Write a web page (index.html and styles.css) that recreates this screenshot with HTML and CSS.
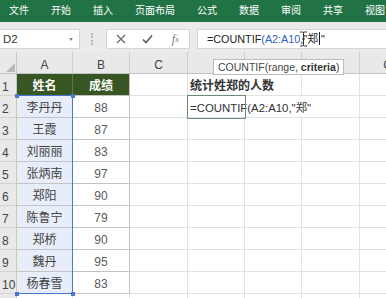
FILE: index.html
```html
<!DOCTYPE html>
<html lang="zh">
<head>
<meta charset="utf-8">
<link rel="stylesheet" href="styles.css">
</head>
<body>
<div class="app">
  <div class="tabs">
    <span class="tab first">文件</span>
    <span class="tab">开始</span>
    <span class="tab">插入</span>
    <span class="tab">页面布局</span>
    <span class="tab">公式</span>
    <span class="tab">数据</span>
    <span class="tab">审阅</span>
    <span class="tab">共享</span>
    <span class="tab">视图</span>
  </div>
  <div class="fbar">
    <div class="namebox"><span>D2</span><span class="dd"></span></div>
    <div class="sep"></div>
    <div class="btns">
      <span class="btn"><svg width="10" height="10" viewBox="0 0 10 10"><path d="M1 1 L9 9 M9 1 L1 9" stroke="#6a6a6a" stroke-width="1.3" fill="none"/></svg></span>
      <span class="btn"><svg width="11" height="10" viewBox="0 0 11 10"><path d="M1 5.5 L4 8.5 L10 1.5" stroke="#5a5a5a" stroke-width="1.6" fill="none"/></svg></span>
      <span class="btn fx">f<sub>x</sub></span>
    </div>
    <div class="formula">=COUNTIF<span class="ref">(A2:A10</span>,"郑<span class="caret"></span>"</div>
    <svg class="ibeam" width="9" height="16" viewBox="0 0 9 16"><path d="M1 1 H3.5 Q4.5 1 4.5 2 V14 Q4.5 15 3.5 15 H1 M8 1 H5.5 Q4.5 1 4.5 2 M4.5 14 Q4.5 15 5.5 15 H8 M3 8 H6" stroke="#333" stroke-width="1" fill="none"/></svg>
  </div>
  <div class="sheet">
    <div class="corner"><svg width="17" height="22" viewBox="0 0 17 22"><path d="M15 11 V20 H6 Z" fill="#b8b8b8"/></svg></div>
    <div class="ch">A</div><div class="ch">B</div><div class="ch">C</div><div class="ch"></div><div class="ch"></div><div class="ch"></div><div class="ch">G</div>

    <div class="rh">1</div><div class="c g">姓名</div><div class="c g gb">成绩</div><div class="c"></div><div class="c d1">统计姓郑的人数</div><div class="c"></div><div class="c"></div>

    <div class="rh">2</div><div class="c a">李丹丹</div><div class="c b">88</div><div class="c"></div><div class="c d2">=COUNTIF(A2:A10,"郑"</div><div class="c"></div>

    <div class="rh">3</div><div class="c a">王霞</div><div class="c b">87</div><div class="c"></div><div class="c"></div><div class="c"></div><div class="c"></div><div class="c"></div>
    <div class="rh">4</div><div class="c a">刘丽丽</div><div class="c b">83</div><div class="c"></div><div class="c"></div><div class="c"></div><div class="c"></div><div class="c"></div>
    <div class="rh">5</div><div class="c a">张炳南</div><div class="c b">97</div><div class="c"></div><div class="c"></div><div class="c"></div><div class="c"></div><div class="c"></div>
    <div class="rh">6</div><div class="c a">郑阳</div><div class="c b">90</div><div class="c"></div><div class="c"></div><div class="c"></div><div class="c"></div><div class="c"></div>
    <div class="rh">7</div><div class="c a">陈鲁宁</div><div class="c b">79</div><div class="c"></div><div class="c"></div><div class="c"></div><div class="c"></div><div class="c"></div>
    <div class="rh">8</div><div class="c a">郑桥</div><div class="c b">90</div><div class="c"></div><div class="c"></div><div class="c"></div><div class="c"></div><div class="c"></div>
    <div class="rh">9</div><div class="c a">魏丹</div><div class="c b">95</div><div class="c"></div><div class="c"></div><div class="c"></div><div class="c"></div><div class="c"></div>
    <div class="rh">10</div><div class="c a">杨春雪</div><div class="c b">83</div><div class="c"></div><div class="c"></div><div class="c"></div><div class="c"></div><div class="c"></div>
    <div class="rh"></div><div class="c"></div><div class="c"></div><div class="c"></div><div class="c"></div><div class="c"></div><div class="c"></div><div class="c"></div>

    <div class="range">
      <span class="hd tl"></span><span class="hd tr"></span><span class="hd bl"></span><span class="hd br"></span>
    </div>
    <div class="tip">COUNTIF(range, <b>criteria</b>)</div>
  </div>
</div>
</body>
</html>
```
FILE: styles.css
```css
html, body {
  margin: 0;
  padding: 0;
  background: #fff;
}
body {
  width: 386px;
  height: 298px;
  overflow: hidden;
  font-family: "Liberation Sans", "Noto Sans CJK SC", sans-serif;
}
.app {
  width: 386px;
  height: 298px;
  overflow: hidden;
}
.tabs {
  height: 22px;
  background: #217346;
  display: flex;
  align-items: center;
  padding-bottom: 2px;
  box-sizing: border-box;
  white-space: nowrap;
}
.tab {
  font-family: "Noto Sans CJK SC", sans-serif;
  font-size: 10px;
  color: #fff;
  padding: 0 11px;
  line-height: 12px;
}
.tab.first {
  padding-left: 9px;
}
.fbar {
  position: relative;
  height: 30px;
  background: #ebebeb;
  display: flex;
  align-items: flex-start;
  padding-top: 7px;
  box-sizing: border-box;
}
.namebox {
  width: 80px;
  height: 20px;
  box-sizing: border-box;
  background: #fff;
  border: 1px solid #d6d6d6;
  border-left: none;
  display: flex;
  align-items: center;
  justify-content: space-between;
  padding: 0 6px 0 3px;
  font-size: 11.5px;
  color: #333;
}
.dd {
  width: 0;
  height: 0;
  border-left: 2.5px solid transparent;
  border-right: 2.5px solid transparent;
  border-top: 3px solid #8a8a8a;
}
.sep {
  margin-left: 11px;
  margin-top: 4px;
  width: 0;
  height: 12px;
  border-left: 2px dotted #b8b8b8;
}
.btns {
  margin-left: 13px;
  width: 84px;
  height: 20px;
  box-sizing: border-box;
  background: #fff;
  border: 1px solid #d6d6d6;
  display: flex;
}
.btn {
  width: 28px;
  height: 18px;
  display: flex;
  align-items: center;
  justify-content: center;
}
.fx {
  font-family: "Liberation Serif", serif;
  font-style: italic;
  font-size: 12px;
  color: #7a7a7a;
}
.fx sub {
  font-size: 8px;
  vertical-align: -1px;
}
.formula {
  margin-left: 7px;
  flex: 1;
  height: 20px;
  box-sizing: border-box;
  background: #fff;
  border: 1px solid #d6d6d6;
  border-right: none;
  padding-left: 9px;
  font-size: 10.8px;
  line-height: 18px;
  color: #222;
  white-space: nowrap;
}
.ref {
  color: #2f62c4;
}
.caret {
  display: inline-block;
  width: 1px;
  height: 13px;
  background: #222;
  vertical-align: -2px;
  margin: 0 1px;
}
.ibeam {
  position: absolute;
  left: 299px;
  top: 9px;
}
.sheet {
  position: relative;
  display: grid;
  grid-template-columns: 17px 56px 57px 58px 57px 57px 58px 57px;
  grid-template-rows: repeat(12, 22px);
  font-size: 12px;
}
.corner {
  background: #e9e9e9;
  border-right: 1px solid #c8c8c8;
  border-bottom: 1px solid #c4c4c4;
  box-sizing: border-box;
  overflow: hidden;
}
.corner svg {
  display: block;
}
.ch {
  background: #e9e9e9;
  border-right: 1px solid #cfcfcf;
  border-bottom: 1px solid #c4c4c4;
  box-sizing: border-box;
  display: flex;
  align-items: center;
  justify-content: center;
  padding-top: 5px;
  color: #444;
  font-size: 12px;
}
.rh {
  background: #e9e9e9;
  border-right: 1px solid #c4c4c4;
  border-bottom: 1px solid #d2d2d2;
  box-sizing: border-box;
  display: flex;
  align-items: flex-end;
  padding-left: 2px;
  padding-bottom: 1px;
  color: #444;
  font-size: 12px;
  line-height: 14px;
}
.c {
  border-right: 1px solid #e2e2e2;
  border-bottom: 1px solid #e2e2e2;
  box-sizing: border-box;
  display: flex;
  align-items: center;
  white-space: nowrap;
}
.g {
  background: #375623;
  color: #fff;
  font-weight: bold;
  justify-content: center;
  border-right-color: #5e7652;
  border-bottom-color: #c0c0c0;
  font-family: "Noto Sans CJK SC", sans-serif;
  font-size: 12px;
}
.gb {
  border-right-color: #c0c0c0;
}
.a {
  background: #e8eef9;
  color: #404040;
  justify-content: center;
  border-bottom-color: #c4c4c4;
  font-family: "Noto Sans CJK SC", sans-serif;
}
.b {
  color: #5a5a5a;
  justify-content: center;
  border-right-color: #c4c4c4;
  border-bottom-color: #c4c4c4;
  padding-top: 2px;
}
.d1 {
  grid-column: span 2;
  padding-left: 2px;
  font-weight: bold;
  color: #333;
  font-family: "Noto Sans CJK SC", sans-serif;
  font-size: 12px;
}
.d2 {
  grid-column: span 3;
  position: relative;
  padding-left: 2px;
  color: #333;
  font-size: 11.4px;
}
.d2::after {
  content: "";
  position: absolute;
  left: -1px;
  top: -1px;
  width: 57px;
  height: 22px;
  border: 1px solid #6a8a72;
  border-bottom-width: 1.5px;
}
.range {
  position: absolute;
  left: 16px;
  top: 43px;
  width: 57px;
  height: 199px;
  box-sizing: border-box;
  border-top: 1px solid #4a78cf;
  border-bottom: 1px solid #4a78cf;
  border-right: 1.5px solid #4a78cf;
  border-left: 1px dashed #d4cf98;
}
.hd {
  position: absolute;
  width: 4px;
  height: 4px;
  background: #4a78cf;
}
.tl { left: -2px; top: -2px; }
.tr { right: -3px; top: -2px; }
.bl { left: -2px; bottom: -3px; }
.br { right: -3px; bottom: -3px; }
.tip {
  position: absolute;
  left: 213px;
  top: 7px;
  height: 16px;
  box-sizing: border-box;
  padding: 0 4px;
  background: #fff;
  border: 1px solid #bdbdbd;
  font-size: 10.5px;
  line-height: 14px;
  color: #444;
  white-space: nowrap;
}
.tip b {
  color: #333;
}
```
